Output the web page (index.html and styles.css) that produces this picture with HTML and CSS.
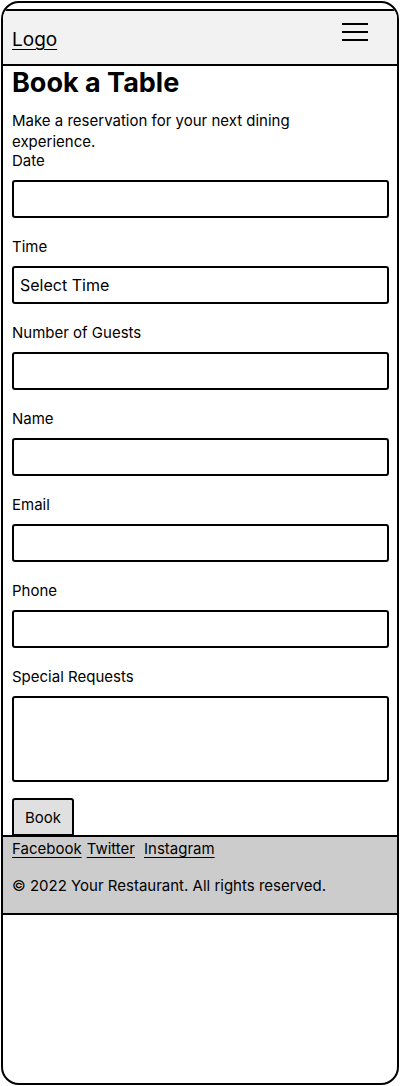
FILE: index.html
```html
<!DOCTYPE html>
<html>
<head>
<meta charset="utf-8">
<link rel="stylesheet" href="styles.css">
</head>
<body>
<div class="frame">
  <header class="header">
    <a class="logo" href="#">Logo</a>
    <div class="burger"><span></span><span></span><span></span></div>
  </header>
  <main class="main">
    <h1 class="title">Book a Table</h1>
    <p class="intro">Make a reservation for your next dining experience.</p>
    <form class="form">
      <label class="label">Date</label>
      <div class="input"></div>
      <label class="label">Time</label>
      <div class="input select">Select Time</div>
      <label class="label">Number of Guests</label>
      <div class="input"></div>
      <label class="label">Name</label>
      <div class="input"></div>
      <label class="label">Email</label>
      <div class="input"></div>
      <label class="label">Phone</label>
      <div class="input"></div>
      <label class="label">Special Requests</label>
      <div class="input textarea"></div>
      <div class="btn">Book</div>
    </form>
  </main>
  <footer class="footer">
    <div class="links">
      <a href="#" class="l1">Facebook</a><a href="#" class="l2">Twitter</a><a href="#">Instagram</a>
    </div>
    <p class="copy">© 2022 Your Restaurant. All rights reserved.</p>
  </footer>
</div>
</body>
</html>
```
FILE: styles.css
```css
* { box-sizing: border-box; }
html, body { margin: 0; padding: 0; background: #fff; }
body { padding: 1px; font-family: Inter, "Noto Sans", sans-serif; color: #000; }
.frame {
  width: 398px;
  height: 1084px;
  border: 2px solid #000;
  border-radius: 18px;
  overflow: hidden;
}
.header {
  margin: 6px -2px 0;
  height: 57px;
  background: #f2f2f2;
  border: 2px solid #000;
  display: flex;
  align-items: center;
  justify-content: space-between;
  padding: 0 29px 0 9px;
}
.logo {
  color: #000;
  font-size: 19px;
  text-decoration: underline;
  text-underline-offset: 3px;
  text-decoration-thickness: 1px;
  margin-top: 4px;
}
.burger {
  width: 26px;
  display: flex;
  flex-direction: column;
  gap: 6px;
  margin-top: -12px;
}
.burger span { display: block; height: 2px; background: #000; }
.main { padding: 0 8px 0 9px; }
.title {
  margin: 0;
  font-size: 27px;
  font-weight: 700;
  line-height: 32px;
  margin-top: 1px;
}
.intro {
  margin: 11px 0 0;
  font-size: 15px;
  line-height: 21px;
  max-width: 300px;
}
.form { display: flex; flex-direction: column; align-items: stretch; }
.label { font-size: 15px; line-height: 18px; display: block; }
.input {
  margin-top: 10px;
  margin-bottom: 20px;
  height: 38px;
  border: 2px solid #000;
  border-radius: 3px;
  font-size: 16px;
  display: flex;
  align-items: center;
  padding: 0 6px;
}
.textarea { height: 86px; margin-bottom: 16px; }
.btn {
  align-self: flex-start;
  width: 62px;
  height: 38px;
  background: #e0e0e0;
  border: 2px solid #000;
  border-radius: 3px 3px 0 0;
  font-size: 15px;
  display: flex;
  align-items: center;
  justify-content: center;
}
.footer {
  margin: -1px -2px 0;
  height: 80px;
  background: #ccc;
  border: 2px solid #000;
  padding: 2px 9px 0;
}
.links { font-size: 15px; line-height: 20px; display: flex; }
.links a { color: #000; text-decoration: underline; text-underline-offset: 3px; text-decoration-thickness: 1px; }
.links .l1 { margin-right: 5px; }
.links .l2 { margin-right: 9px; }
.copy { margin: 17px 0 0; font-size: 15px; line-height: 20px; }
```
